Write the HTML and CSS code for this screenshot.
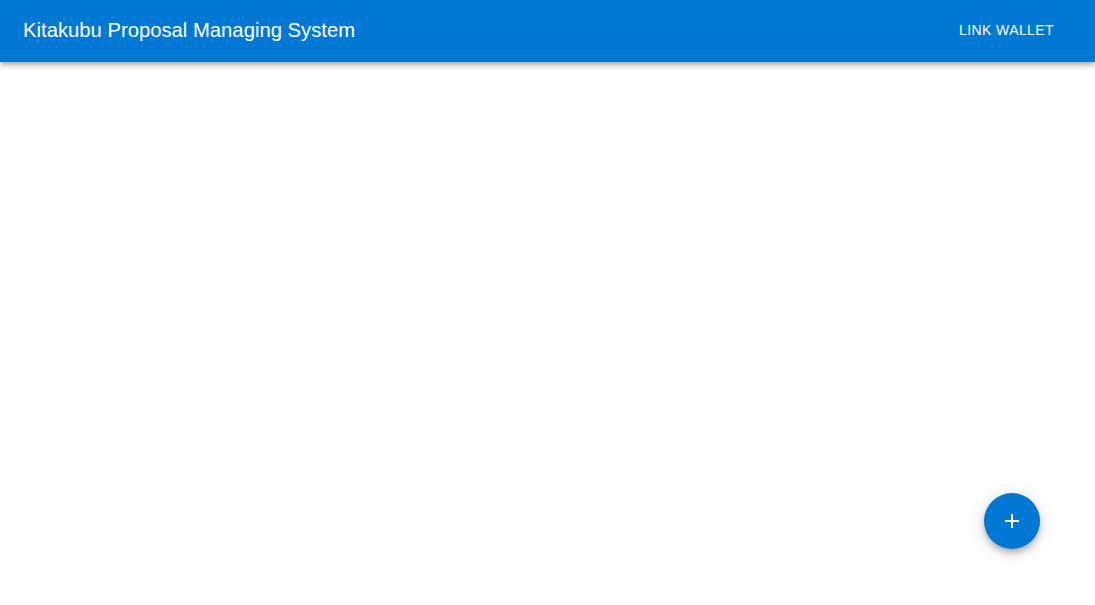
FILE: index.html
```html
<!DOCTYPE html>
<html>
<head>
<meta charset="utf-8">
<link rel="stylesheet" href="styles.css">
</head>
<body>
<header class="appbar">
  <div class="title">Kitakubu Proposal Managing System</div>
  <button class="link-btn">LINK WALLET</button>
</header>
<main class="content"></main>
<button class="fab" aria-label="add">
  <svg width="24" height="24" viewBox="0 0 24 24"><path d="M19 13h-6v6h-2v-6H5v-2h6V5h2v6h6v2z" fill="#fff"/></svg>
</button>
</body>
</html>
```
FILE: styles.css
```css
html, body { margin: 0; padding: 0; height: 100%; background: #fff; font-family: "Liberation Sans", Arial, sans-serif; }
.appbar {
  height: 62px;
  background: #0078d4;
  color: #fff;
  display: flex;
  align-items: center;
  justify-content: space-between;
  padding: 0 25px 2px 23px;
  box-sizing: border-box;
  box-shadow: 0 2px 4px -1px rgba(0,0,0,0.2), 0 4px 5px 0 rgba(0,0,0,0.14), 0 1px 10px 0 rgba(0,0,0,0.12);
  position: relative;
  z-index: 2;
}
.title { font-size: 20.25px; font-weight: 400; letter-spacing: 0; }
.link-btn {
  background: none; border: 0; color: #fff;
  font-family: "Liberation Sans", Arial, sans-serif;
  font-size: 14px; font-weight: 500; letter-spacing: 0.4px;
  padding: 6px 16px; cursor: pointer;
}
.fab {
  position: fixed; right: 55px; bottom: 56px;
  width: 56px; height: 56px; border-radius: 50%;
  background: #0078d4; border: 0; padding: 0;
  display: flex; align-items: center; justify-content: center;
  box-shadow: 0 3px 5px -1px rgba(0,0,0,0.2), 0 6px 10px 0 rgba(0,0,0,0.14), 0 1px 18px 0 rgba(0,0,0,0.12);
}
```
